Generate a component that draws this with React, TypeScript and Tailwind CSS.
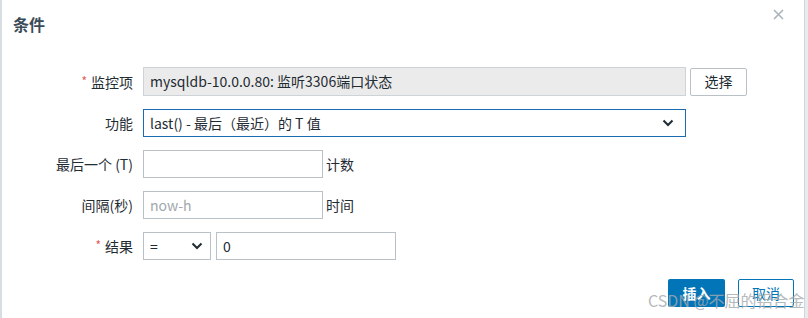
import React from 'react';

const font = { fontFamily: '"Noto Sans CJK SC", "Noto Sans", Arial, sans-serif' };

function Chevron() {
  return (
    <svg width="12" height="8" viewBox="0 0 12 8" fill="none">
      <path d="M1.5 1.5 6 6l4.5-4.5" stroke="#1f2c33" strokeWidth="2" />
    </svg>
  );
}

function Label({ text, required }: { text: string; required?: boolean }) {
  return (
    <div className="w-[131px] text-right text-[14px] text-[#1f2c33] leading-none">
      {required && <span className="text-[#e45959] text-[12px] mr-1 relative -top-[2px]">*</span>}
      {text}
    </div>
  );
}

export default function App() {
  return (
    <div className="w-[808px] h-[318px] bg-[#e8ebed] flex overflow-hidden" style={font}>
      <div className="relative w-[805px] h-full bg-white border-l-2 border-l-[#d7dde1] border-r border-r-[#cfd5d9]">
        <div className="flex justify-between pl-[11px] pr-[20px] pt-[12px]">
          <h1 className="text-[16px] font-bold text-[#3b4c58] leading-[24px]">条件</h1>
          <svg width="11" height="11" viewBox="0 0 11 11" className="mt-[-3px]">
            <path d="M1 1l9 9M10 1l-9 9" stroke="#aab5bc" strokeWidth="1.6" />
          </svg>
        </div>

        <div className="mt-[31px] flex flex-col gap-[13px]">
          <div className="flex items-center gap-[10px]">
            <Label text="监控项" required />
            <div className="flex items-center gap-[4px]">
              <div className="w-[543px] h-[29px] bg-[#ebebeb] border border-[#cdd3d6] px-[6px] flex items-center text-[14px] text-[#1f2c33]">
                mysqldb-10.0.0.80: 监听3306端口状态
              </div>
              <button className="w-[57px] h-[28px] bg-white border border-[#b7c1c7] rounded-[2px] text-[14px] text-[#1f2c33]">
                选择
              </button>
            </div>
          </div>

          <div className="flex items-center gap-[10px]">
            <Label text="功能" />
            <div className="w-[543px] h-[28px] border border-[#1a6bb0] px-[6px] flex items-center justify-between text-[14px] text-[#1f2c33]">
              <span>last() - 最后（最近）的 T 值</span>
              <span className="mr-[5px]"><Chevron /></span>
            </div>
          </div>

          <div className="flex items-center gap-[10px]">
            <Label text="最后一个 (T)" />
            <div className="w-[180px] h-[28px] border border-[#b7c1c7]" />
            <span className="-ml-[7px] text-[14px] text-[#1f2c33]">计数</span>
          </div>

          <div className="flex items-center gap-[10px]">
            <Label text="间隔(秒)" />
            <div className="w-[180px] h-[28px] border border-[#b7c1c7] px-[6px] flex items-center text-[14px] text-[#a0a8ad]">
              now-h
            </div>
            <span className="-ml-[7px] text-[14px] text-[#1f2c33]">时间</span>
          </div>

          <div className="flex items-center gap-[10px]">
            <Label text="结果" required />
            <div className="flex gap-[5px]">
              <div className="w-[68px] h-[28px] border border-[#b7c1c7] px-[6px] flex items-center justify-between text-[14px] text-[#1f2c33]">
                <span>=</span>
                <span className="mr-[1px]"><Chevron /></span>
              </div>
              <div className="w-[180px] h-[28px] border border-[#b7c1c7] px-[6px] flex items-center text-[14px] text-[#1f2c33]">
                0
              </div>
            </div>
          </div>
        </div>

        <div className="flex justify-end gap-[13px] pr-[10px] mt-[19px]">
          <button className="w-[57px] h-[28px] bg-[#0275b8] rounded-[2px] text-[14px] text-white font-bold">插入</button>
          <button className="w-[56px] h-[28px] bg-white border border-[#0275b8] rounded-[2px] text-[14px] text-[#0275b8]">取消</button>
        </div>

        {/* watermark over the buttons */}
        <div className="absolute left-[646px] top-[292px] text-[16px] text-[#a3a9ad] opacity-80 leading-none whitespace-nowrap">
          CSDN @不屈的铝合金
        </div>
      </div>
    </div>
  );
}
